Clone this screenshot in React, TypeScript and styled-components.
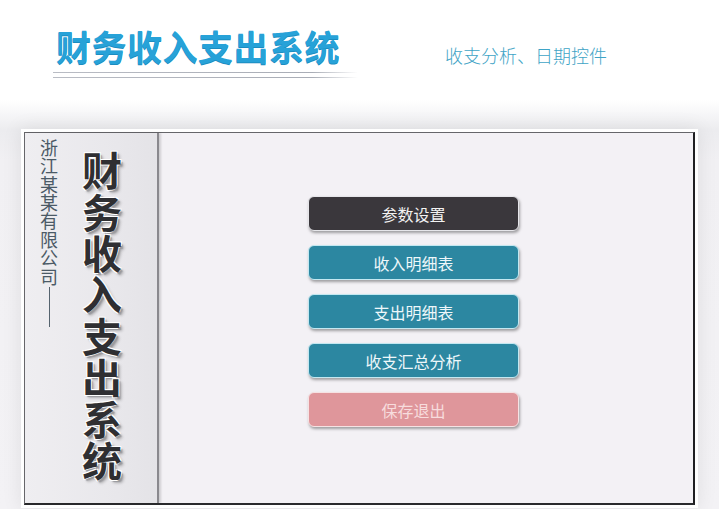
import { createGlobalStyle, styled } from 'styled-components';

const GlobalStyle = createGlobalStyle`
  html, body {
    margin: 0;
    padding: 0;
    background: #ffffff;
    font-family: "Noto Sans CJK SC", "Noto Sans", sans-serif;
  }
  #root {
    width: 719px;
    height: 509px;
    overflow: hidden;
  }
`;

const Header = styled.header`
  height: 100px;
  box-sizing: border-box;
  padding: 24px 0 0 53px;
  display: flex;
  align-items: flex-start;
  background: #ffffff;
`;

const TitleBlock = styled.div`
  width: 305px;
  display: flex;
  flex-direction: column;
`;

const Title = styled.h1`
  margin: 0 0 0 3px;
  font-size: 35px;
  line-height: 44px;
  font-weight: 700;
  letter-spacing: 0.5px;
  color: #27a2d8;
  text-shadow: 0 1px 0 #1b8cc0, 0 0 2px rgba(255, 255, 255, 0.9);
`;

const Rule = styled.div<{ $gap: number }>`
  height: 1px;
  background: linear-gradient(to right, #b9bcc4 0%, #a9adb6 85%, rgba(170, 174, 182, 0) 100%);
  margin-top: ${(p) => p.$gap}px;
`;

const Subtitle = styled.div`
  margin: 20px 0 0 87px;
  font-size: 18px;
  line-height: 22px;
  font-weight: 300;
  color: #3fa4c6;
`;

const Stage = styled.div`
  height: 409px;
  box-sizing: border-box;
  padding: 32px 0 0 24px;
  background: linear-gradient(to bottom, #ffffff 0px, #ececef 30px, #f1f0f3 60px, #f3f2f5 100%);
`;

const Panel = styled.div`
  width: 671px;
  height: 373px;
  box-sizing: border-box;
  display: flex;
  border: 1px solid #66666a;
  border-right: 2px solid #1f1f22;
  border-bottom: 2px solid #2a2a2d;
  box-shadow: 0 0 0 3px #ffffff, 0 0 18px 4px rgba(0, 0, 0, 0.08);
  background: #f3f1f5;
`;

const Sidebar = styled.aside`
  width: 134px;
  flex-shrink: 0;
  box-sizing: border-box;
  padding: 6px 0 0 14px;
  display: flex;
  gap: 20px;
  background: linear-gradient(to right, #efeef1 0%, #e8e7eb 70%, #e4e3e7 100%);
  border-right: 2px solid #8a898e;
  box-shadow: 2px 0 2px rgba(0, 0, 0, 0.15);
`;

const CompanyColumn = styled.div`
  width: 20px;
  display: flex;
  flex-direction: column;
  align-items: center;
`;

const Company = styled.div`
  writing-mode: vertical-rl;
  font-size: 18px;
  line-height: 20px;
  letter-spacing: 0.4px;
  color: #4b5a66;
`;

const CompanyDash = styled.div`
  width: 1px;
  height: 40px;
  margin-top: 1px;
  background: #55636e;
`;

const BigTitle = styled.div`
  writing-mode: vertical-rl;
  margin-top: 12px;
  font-size: 40px;
  line-height: 46px;
  letter-spacing: 1.4px;
  font-weight: 700;
  color: #2f2f32;
  text-shadow:
    -1px -1px 0 #ffffff,
    1px -1px 0 #ffffff,
    -1px 1px 0 #ffffff,
    2px 2px 1px #9a9a9e,
    3px 3px 3px rgba(0, 0, 0, 0.25);
`;

const Main = styled.main`
  flex: 1;
  box-sizing: border-box;
  padding: 63px 0 0 149px;
  display: flex;
  flex-direction: column;
  gap: 14px;
`;

type Tone = 'dark' | 'teal' | 'pink';

const tones: Record<Tone, { bg: string; border: string; text: string }> = {
  dark: { bg: '#3a373c', border: '#e6e6ea', text: '#f2f2f2' },
  teal: { bg: '#2c87a1', border: '#c3e8f1', text: '#eef7fa' },
  pink: { bg: '#df969b', border: '#f6e2e3', text: '#f7dcdd' },
};

const MenuButton = styled.button<{ $tone: Tone }>`
  width: 211px;
  height: 35px;
  box-sizing: border-box;
  border-radius: 6px;
  border: 1.5px solid ${(p) => tones[p.$tone].border};
  background: ${(p) => tones[p.$tone].bg};
  color: ${(p) => tones[p.$tone].text};
  font-family: "Noto Sans CJK SC", "Noto Sans", sans-serif;
  font-size: 16px;
  line-height: 1;
  padding: 0;
  box-shadow: 1px 2px 3px rgba(0, 0, 0, 0.35);
  cursor: pointer;
`;

const buttons: { label: string; tone: Tone }[] = [
  { label: '参数设置', tone: 'dark' },
  { label: '收入明细表', tone: 'teal' },
  { label: '支出明细表', tone: 'teal' },
  { label: '收支汇总分析', tone: 'teal' },
  { label: '保存退出', tone: 'pink' },
];

const App = () => {
  return (
    <>
      <GlobalStyle />
      <Header>
        <TitleBlock>
          <Title>财务收入支出系统</Title>
          <Rule $gap={4} />
          <Rule $gap={4} />
        </TitleBlock>
        <Subtitle>收支分析、日期控件</Subtitle>
      </Header>
      <Stage>
        <Panel>
          <Sidebar>
            <CompanyColumn>
              <Company>浙江某某有限公司</Company>
              <CompanyDash />
            </CompanyColumn>
            <BigTitle>财务收入支出系统</BigTitle>
          </Sidebar>
          <Main>
            {buttons.map((b) => (
              <MenuButton key={b.label} $tone={b.tone}>
                {b.label}
              </MenuButton>
            ))}
          </Main>
        </Panel>
      </Stage>
    </>
  );
};

export default App;
